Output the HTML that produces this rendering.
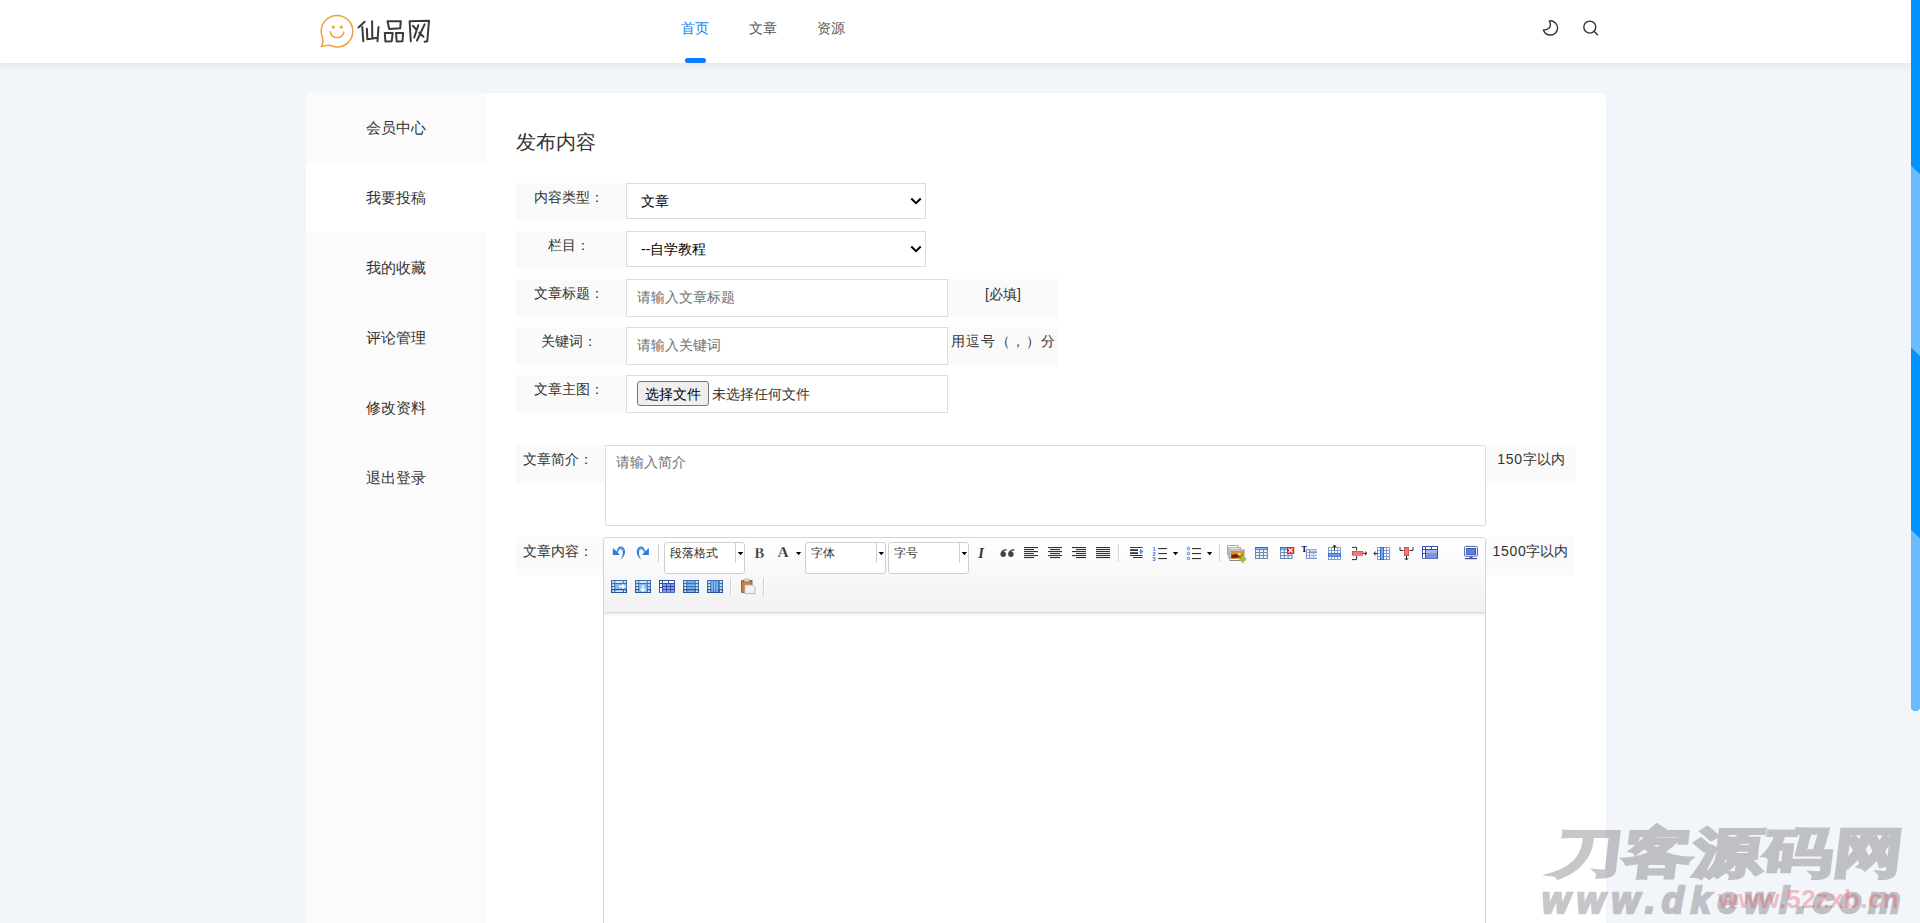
<!DOCTYPE html>
<html><head><meta charset="utf-8">
<style>
*{box-sizing:border-box;margin:0;padding:0}
html,body{width:1920px;height:923px;overflow:hidden;background:#f2f5fa;font-family:"Liberation Sans",sans-serif;color:#333}
.a{position:absolute}
#hdr{left:0;top:0;width:1911px;height:63px;background:#fff;box-shadow:0 2px 8px rgba(0,0,0,.08)}
.nav{top:19px;font-size:14px;line-height:18px;color:#555;white-space:nowrap}
#card{left:306px;top:93px;width:1300px;height:900px;background:#fff;border-radius:6px;overflow:hidden}
#side{left:0;top:0;width:180px;height:900px;background:#fbfbfb}
.si{left:0;width:180px;height:70px;line-height:70px;text-align:center;font-size:15px;color:#333}
.lab{background:#fafafa;font-size:14px;color:#333;text-align:center}
.box{background:#fff;border:1px solid #ddd}
.ph{color:#707070}
.cmb{height:32px;background:#fff;border:1px solid #cfcfcf;border-radius:3px;font-size:12px;color:#333}
.cmb span{position:absolute;left:5px;top:3px;line-height:14px}
.cmb i{position:absolute;top:0;width:1px;height:20px;background:#d0d0d0}

</style></head><body>
<div id="hdr" class="a">
  <svg class="a" style="left:0;top:0" width="440" height="63" viewBox="0 0 440 63">
    <path d="M337 15.4 A15.8 15.8 0 0 1 352.8 31.2 A15.8 15.8 0 0 1 337 47 C333.5 47 331.5 45.6 329 45.3 C326 45 323.5 46.5 321.3 46.4 C322.8 44 323.5 41 322.5 37.5 C321.6 35 321.2 33 321.2 31.2 A15.8 15.8 0 0 1 337 15.4 Z" fill="none" stroke="#eea03c" stroke-width="1.5" stroke-linejoin="round"/>
    <circle cx="333.3" cy="27.1" r="1.6" fill="#eea03c"/><circle cx="341.3" cy="27.1" r="1.6" fill="#eea03c"/>
    <path d="M330.4 31.8 C331.5 39.5 342.5 39.5 343.8 32.1" fill="none" stroke="#eea03c" stroke-width="1.5" stroke-linecap="round"/>
    <g fill="none" stroke="#3a3a3a" stroke-width="2" stroke-linecap="round" stroke-linejoin="round">
      <path d="M364.6 21.7 L358.5 27.5 M362.3 27.1 L363.3 41.2 M366.9 28.7 L367.3 39.2 L377.7 37.7 M372.1 21.2 L372.3 38.3 M378.5 27.1 L377.5 41.2"/>
      <path d="M387.5 21.3 L400.8 21.3 L400.2 28.3 L389.2 29 Z M384.8 33.1 L392.7 33.1 L391.7 41.2 L385.4 41.5 Z M396 32.9 L403.1 32.9 L402.5 41.2 L396.7 41.5 Z"/>
      <path d="M409.6 21.3 L410.8 41.2 M409.6 21.3 L429 20.8 L427.3 41.2 L424.6 41.7 M418.3 25.2 L414.2 37.5 M412.8 25.8 L416.5 29.8 M424.6 24.4 L417 40.5 M419.2 32.6 L423.5 36.8"/>
    </g>
  </svg>
  <div class="a nav" style="left:681px;color:#1a7ff0">首页</div>
  <div class="a nav" style="left:749px">文章</div>
  <div class="a nav" style="left:817px">资源</div>
  <div class="a" style="left:685px;top:58px;width:21px;height:5px;border-radius:3px;background:#0a7cff"></div>
  <svg class="a" style="left:1540px;top:18px" width="20" height="20" viewBox="0 0 20 20">
    <path d="M9.3 3.2 C11 5.5 10.8 9 8.5 10.5 C7 11.5 5 12 3.4 11.9 C4.5 15 7.3 17 10.5 17 C14.5 17 17.6 13.8 17.6 10 C17.6 6 14.2 2.8 10.3 2.8 C9.9 2.8 9.5 2.9 9.3 3.2 Z" fill="none" stroke="#333" stroke-width="1.4" stroke-linejoin="round"/>
  </svg>
  <svg class="a" style="left:1580px;top:18px" width="20" height="20" viewBox="0 0 20 20">
    <circle cx="9.8" cy="9.1" r="6" fill="none" stroke="#333" stroke-width="1.4"/>
    <path d="M14 13.3 L17.5 16.8" stroke="#333" stroke-width="1.4" stroke-linecap="round"/>
  </svg>
</div>

<div id="card" class="a">
  <div id="side" class="a">
    <div class="a si" style="top:0">会员中心</div>
    <div class="a si" style="top:70px;background:#fff">我要投稿</div>
    <div class="a si" style="top:140px">我的收藏</div>
    <div class="a si" style="top:210px">评论管理</div>
    <div class="a si" style="top:280px">修改资料</div>
    <div class="a si" style="top:350px">退出登录</div>
  </div>
</div>

<div class="a" style="left:516px;top:130px;font-size:20px;line-height:24px;color:#333">发布内容</div>

<!-- rows -->
<div class="a lab" style="padding-right:5px;left:516px;top:183px;width:110px;height:38px;line-height:28px">内容类型：</div>
<div class="a box" style="left:626px;top:183px;width:300px;height:36px;font-size:14px;line-height:34px;padding-left:14px;color:#000">文章</div>
<div class="a lab" style="padding-right:5px;left:516px;top:231px;width:110px;height:38px;line-height:28px">栏目：</div>
<div class="a box" style="left:626px;top:231px;width:300px;height:36px;font-size:14px;line-height:34px;padding-left:14px;color:#000">--自学教程</div>

<div class="a lab" style="padding-right:5px;left:516px;top:279px;width:110px;height:38px;line-height:28px">文章标题：</div>
<div class="a box ph" style="left:626px;top:279px;width:322px;height:38px;font-size:14px;line-height:35px;padding-left:10px">请输入文章标题</div>
<div class="a lab" style="left:948px;top:279px;width:110px;height:38px;line-height:30px">[必填]</div>

<div class="a lab" style="padding-right:5px;left:516px;top:327px;width:110px;height:38px;line-height:28px">关键词：</div>
<div class="a box ph" style="left:626px;top:327px;width:322px;height:38px;font-size:14px;line-height:35px;padding-left:10px">请输入关键词</div>
<div class="a lab" style="left:948px;top:327px;width:110px;height:38px;line-height:28px;text-align:left;padding-left:3px;letter-spacing:1px">用逗号（，）分</div>

<div class="a lab" style="padding-right:5px;left:516px;top:375px;width:110px;height:38px;line-height:28px">文章主图：</div>
<div class="a box" style="left:626px;top:375px;width:322px;height:38px"></div>
<div class="a" style="left:637px;top:381px;width:72px;height:25px;background:#efefef;border:1px solid #767676;border-radius:3px;font-size:14px;line-height:25px;text-align:center;color:#000">选择文件</div>
<div class="a" style="left:712px;top:385px;font-size:14px;line-height:18px;color:#333;white-space:nowrap">未选择任何文件</div>
<svg class="a" style="left:0;top:0" width="1000" height="300" viewBox="0 0 1000 300"><path d="M912 199.2 L916 203.2 L920 199.2 M912 247.2 L916 251.2 L920 247.2" fill="none" stroke="#000" stroke-width="2" stroke-linecap="square"/></svg>

<div class="a lab" style="padding-right:5px;left:516px;top:445px;width:89px;height:38px;line-height:28px">文章简介：</div>
<div class="a box ph" style="left:605px;top:445px;width:881px;height:81px;font-size:14px;line-height:20px;padding:6px 10px;border-radius:2px">请输入简介</div>
<div class="a lab" style="left:1486px;top:445px;width:90px;height:38px;line-height:28px"><span style="letter-spacing:.7px">150</span>字以内</div>

<div class="a lab" style="padding-right:5px;left:516px;top:537px;width:89px;height:38px;line-height:28px">文章内容：</div>
<div class="a lab" style="left:1486px;top:537px;width:89px;height:38px;line-height:28px"><span style="letter-spacing:.7px">1500</span>字以内</div>
<div class="a" id="ed" style="left:603px;top:537px;width:883px;height:420px;border:1px solid #d4d4d4;border-radius:4px;background:#fff;overflow:hidden">
  <div class="a" style="left:0;top:0;width:881px;height:75px;background:linear-gradient(#fff,#f1f1f1);border-bottom:1px solid #dcdcdc;box-shadow:0 1px 3px rgba(0,0,0,.12)"></div>
</div>
<div class="a cmb" style="left:664px;top:542px;width:81px"><span>段落格式</span><i style="left:70px"></i></div>
<div class="a cmb" style="left:805px;top:542px;width:81px"><span>字体</span><i style="left:70px"></i></div>
<div class="a cmb" style="left:888px;top:542px;width:81px"><span>字号</span><i style="left:70px"></i></div>
<svg class="a" style="left:0;top:0;pointer-events:none" width="1920" height="923" viewBox="0 0 1920 923"><g><path d="M612.9 548.1 L612.9 554.9 L619.7 554.9 L617.6 552.3 Z" fill="#2b7bd8"/>
<path d="M616.7 550.9 C617.6 548 619 546.6 620.6 546.6 C623.3 546.6 625 549 625 552 C625 555 623 557.8 620.2 559.9 C621.8 557.5 622.9 555.5 622.9 553 C622.9 550.6 621.8 549.2 620.5 549.2 C619.3 549.2 618.4 550.3 617.9 552.5 Z" fill="#2b7bd8"/>
<path d="M618.6 550.6 C619.2 549 620 548.2 620.8 548.2 C622 548.2 623 549.2 623.6 550.8" fill="none" stroke="#9ccaf8" stroke-width="0.9"/></g><g transform="translate(1261.8,0) scale(-1,1)"><path d="M612.9 548.1 L612.9 554.9 L619.7 554.9 L617.6 552.3 Z" fill="#2b7bd8"/>
<path d="M616.7 550.9 C617.6 548 619 546.6 620.6 546.6 C623.3 546.6 625 549 625 552 C625 555 623 557.8 620.2 559.9 C621.8 557.5 622.9 555.5 622.9 553 C622.9 550.6 621.8 549.2 620.5 549.2 C619.3 549.2 618.4 550.3 617.9 552.5 Z" fill="#2b7bd8"/>
<path d="M618.6 550.6 C619.2 549 620 548.2 620.8 548.2 C622 548.2 623 549.2 623.6 550.8" fill="none" stroke="#9ccaf8" stroke-width="0.9"/></g><rect x="658.0" y="544" width="1" height="18" fill="#cfcfd4"/><rect x="659.0" y="544" width="1" height="18" fill="#fff"/><rect x="1117.9" y="544" width="1" height="18" fill="#cfcfd4"/><rect x="1118.9" y="544" width="1" height="18" fill="#fff"/><rect x="1219.1" y="544" width="1" height="18" fill="#cfcfd4"/><rect x="1220.1" y="544" width="1" height="18" fill="#fff"/><rect x="730.1" y="578" width="1" height="18" fill="#cfcfd4"/><rect x="731.1" y="578" width="1" height="18" fill="#fff"/><rect x="763.0" y="578" width="1" height="18" fill="#cfcfd4"/><rect x="764.0" y="578" width="1" height="18" fill="#fff"/><path d="M737.7 552 L743.3 552 L740.5 555.2 Z" fill="#000"/><path d="M796 552 L801.2 552 L798.6 555.2 Z" fill="#000"/><path d="M878.7 552 L884 552 L881.35 555.2 Z" fill="#000"/><path d="M961.7 552 L967 552 L964.35 555.2 Z" fill="#000"/><path d="M1172.9 552 L1178.2 552 L1175.5500000000002 555.2 Z" fill="#000"/><path d="M1207 552 L1212.2 552 L1209.6 555.2 Z" fill="#000"/><text x="754.6" y="558" font-family="Liberation Serif" font-weight="bold" font-size="14.5" fill="#333" stroke="#fff" stroke-width="0.25">B</text><text x="777.4" y="557.3" font-family="Liberation Serif" font-weight="bold" font-size="15.5" fill="#333" stroke="#fff" stroke-width="0.25">A</text><text x="978.2" y="558" font-family="Liberation Serif" font-weight="bold" font-style="italic" font-size="14.5" fill="#333">I</text><circle cx="1003.2" cy="554.2" r="2.7" fill="#444"/><path d="M1000.6 553.6 C1000.8000000000001 551 1003.0 549.4 1006.6 549 L1006.6 550.2 C1004.4000000000001 550.8 1003.0 551.8 1003.6 552.6 Z" fill="#444"/><circle cx="1010.9" cy="554.2" r="2.7" fill="#444"/><path d="M1008.3 553.6 C1008.5 551 1010.6999999999999 549.4 1014.3 549 L1014.3 550.2 C1012.1 550.8 1010.6999999999999 551.8 1011.3 552.6 Z" fill="#444"/><rect x="1024" y="547" width="14" height="1.1" fill="#333"/><rect x="1024" y="549" width="10" height="1.1" fill="#333"/><rect x="1024" y="551" width="14" height="1.1" fill="#333"/><rect x="1024" y="553" width="10" height="1.1" fill="#333"/><rect x="1024" y="555" width="14" height="1.1" fill="#333"/><rect x="1024" y="557" width="10" height="1.1" fill="#333"/><rect x="1048.0" y="547" width="14" height="1.1" fill="#333"/><rect x="1050.0" y="549" width="10" height="1.1" fill="#333"/><rect x="1048.0" y="551" width="14" height="1.1" fill="#333"/><rect x="1050.0" y="553" width="10" height="1.1" fill="#333"/><rect x="1048.0" y="555" width="14" height="1.1" fill="#333"/><rect x="1050.0" y="557" width="10" height="1.1" fill="#333"/><rect x="1072" y="547" width="14" height="1.1" fill="#333"/><rect x="1076" y="549" width="10" height="1.1" fill="#333"/><rect x="1072" y="551" width="14" height="1.1" fill="#333"/><rect x="1076" y="553" width="10" height="1.1" fill="#333"/><rect x="1072" y="555" width="14" height="1.1" fill="#333"/><rect x="1076" y="557" width="10" height="1.1" fill="#333"/><rect x="1096" y="547" width="14" height="1.1" fill="#333"/><rect x="1096" y="549" width="14" height="1.1" fill="#333"/><rect x="1096" y="551" width="14" height="1.1" fill="#333"/><rect x="1096" y="553" width="14" height="1.1" fill="#333"/><rect x="1096" y="555" width="14" height="1.1" fill="#333"/><rect x="1096" y="557" width="14" height="1.1" fill="#333"/><rect x="1130" y="547" width="12.5" height="1" fill="#444"/><rect x="1130" y="549.3" width="8" height="1.6" fill="#222"/><rect x="1130" y="552.3" width="8" height="1.6" fill="#222"/><rect x="1130" y="555" width="12.5" height="1" fill="#333"/><rect x="1133" y="557" width="9.5" height="1" fill="#333"/><path d="M1139 551.6 L1141 551.6 L1140 549.4 L1143.2 551.6 L1140 553.8 L1141 551.6" fill="#3d8cf0" stroke="#3d8cf0" stroke-width="0.8"/><text x="1152.5" y="551" font-family="Liberation Sans" font-weight="bold" font-size="5.5" fill="#2f6fe8">1</text><text x="1152.5" y="556" font-family="Liberation Sans" font-weight="bold" font-size="5.5" fill="#2f6fe8">2</text><text x="1152.5" y="561" font-family="Liberation Sans" font-weight="bold" font-size="5.5" fill="#2f6fe8">3</text><rect x="1158.3" y="548" width="8.6" height="1.1" fill="#333"/><rect x="1158.3" y="553" width="8.6" height="1.1" fill="#333"/><rect x="1158.3" y="558" width="8.6" height="1.1" fill="#333"/><circle cx="1188.5" cy="548.5" r="1.25" fill="none" stroke="#2f6fe8" stroke-width="0.9"/><rect x="1192" y="548.0" width="9" height="1.1" fill="#333"/><circle cx="1188.5" cy="553.5" r="1.25" fill="none" stroke="#2f6fe8" stroke-width="0.9"/><rect x="1192" y="553.0" width="9" height="1.1" fill="#333"/><circle cx="1188.5" cy="558.5" r="1.25" fill="none" stroke="#2f6fe8" stroke-width="0.9"/><rect x="1192" y="558.0" width="9" height="1.1" fill="#333"/><rect x="1227.5" y="545.5" width="10.5" height="9" fill="#fff" stroke="#aaa" stroke-width="1"/><rect x="1228.8" y="547.8" width="11.5" height="10" fill="#fff" stroke="#999" stroke-width="1"/><rect x="1230" y="550" width="14" height="10.5" fill="#fff" stroke="#888" stroke-width="1"/><rect x="1231" y="551" width="12.4" height="7.8" fill="#d9670f"/><rect x="1231" y="551" width="12.4" height="3" fill="#e98a2a"/><circle cx="1239.5" cy="554" r="1.6" fill="#f6d36a"/><path d="M1231.5 555.5 L1236 554 L1240 557 L1231.5 558" fill="#4a2a12"/><path d="M1241.5 555.5 h2.5 v2.3 h2.2 v2.6 h-2.2 v2.3 h-2.5 v-2.3 h-2.2 v-2.6 h2.2 Z" fill="#8ccc2a"/><rect x="1255" y="547" width="13" height="12" fill="#6d89b8"/><rect x="1255" y="547" width="13" height="2.2" fill="#2d6be0"/><rect x="1256" y="548.2" width="11" height="1" fill="#9cc4f4"/><rect x="1256.00" y="550.20" width="2.90" height="1.83" fill="#fff"/><rect x="1256.00" y="553.13" width="2.90" height="1.83" fill="#fff"/><rect x="1256.00" y="556.07" width="2.90" height="1.83" fill="#fff"/><rect x="1260.00" y="550.20" width="2.90" height="1.83" fill="#fff"/><rect x="1260.00" y="553.13" width="2.90" height="1.83" fill="#fff"/><rect x="1260.00" y="556.07" width="2.90" height="1.83" fill="#fff"/><rect x="1264.00" y="550.20" width="2.90" height="1.83" fill="#fff"/><rect x="1264.00" y="553.13" width="2.90" height="1.83" fill="#fff"/><rect x="1264.00" y="556.07" width="2.90" height="1.83" fill="#fff"/><rect x="1280" y="547" width="12.5" height="12" fill="#6d89b8"/><rect x="1280" y="547" width="12.5" height="2.2" fill="#2d6be0"/><rect x="1281" y="548.2" width="10.5" height="1" fill="#9cc4f4"/><rect x="1281.00" y="550.20" width="2.73" height="1.83" fill="#fff"/><rect x="1281.00" y="553.13" width="2.73" height="1.83" fill="#fff"/><rect x="1281.00" y="556.07" width="2.73" height="1.83" fill="#fff"/><rect x="1284.83" y="550.20" width="2.73" height="1.83" fill="#fff"/><rect x="1284.83" y="553.13" width="2.73" height="1.83" fill="#fff"/><rect x="1284.83" y="556.07" width="2.73" height="1.83" fill="#fff"/><rect x="1288.67" y="550.20" width="2.73" height="1.83" fill="#fff"/><rect x="1288.67" y="553.13" width="2.73" height="1.83" fill="#fff"/><rect x="1288.67" y="556.07" width="2.73" height="1.83" fill="#fff"/><rect x="1287" y="547" width="7.2" height="7" fill="#e02020"/><path d="M1288.6 548.6 L1292.6 552.6 M1292.6 548.6 L1288.6 552.6" stroke="#fff" stroke-width="1.4"/><text x="1301.5" y="552.3" font-family="Liberation Serif" font-weight="bold" font-size="8" fill="#000">T</text><rect x="1305.8" y="549.2" width="11.2" height="9.8" fill="#7f95c0"/><rect x="1307" y="550.3" width="2" height="2" fill="#fff"/><rect x="1307" y="553" width="2" height="2.4" fill="#fff"/><rect x="1307" y="556" width="2" height="2" fill="#fff"/><rect x="1310" y="550.3" width="7" height="1" fill="#fff"/><rect x="1310" y="553" width="3" height="2" fill="#fff"/><rect x="1314" y="553" width="3" height="2" fill="#fff"/><rect x="1310" y="556" width="3" height="2" fill="#fff"/><rect x="1314" y="556" width="3" height="2" fill="#fff"/><rect x="1310" y="553" width="7" height="5" fill="#c9d6f0" opacity="0.6"/><rect x="1328" y="547" width="13" height="13" fill="#7d9bd0"/><rect x="1329.00" y="548.00" width="2.00" height="2.00" fill="#fff"/><rect x="1329.00" y="551.00" width="2.00" height="2.00" fill="#fff"/><rect x="1329.00" y="554.00" width="2.00" height="2.00" fill="#fff"/><rect x="1329.00" y="557.00" width="2.00" height="2.00" fill="#fff"/><rect x="1332.00" y="548.00" width="2.00" height="2.00" fill="#fff"/><rect x="1332.00" y="551.00" width="2.00" height="2.00" fill="#fff"/><rect x="1332.00" y="554.00" width="2.00" height="2.00" fill="#fff"/><rect x="1332.00" y="557.00" width="2.00" height="2.00" fill="#fff"/><rect x="1335.00" y="548.00" width="2.00" height="2.00" fill="#fff"/><rect x="1335.00" y="551.00" width="2.00" height="2.00" fill="#fff"/><rect x="1335.00" y="554.00" width="2.00" height="2.00" fill="#fff"/><rect x="1335.00" y="557.00" width="2.00" height="2.00" fill="#fff"/><rect x="1338.00" y="548.00" width="2.00" height="2.00" fill="#fff"/><rect x="1338.00" y="551.00" width="2.00" height="2.00" fill="#fff"/><rect x="1338.00" y="554.00" width="2.00" height="2.00" fill="#fff"/><rect x="1338.00" y="557.00" width="2.00" height="2.00" fill="#fff"/><rect x="1328" y="553" width="13" height="3.6" fill="#2f6fe0"/><rect x="1329" y="554" width="11" height="1.6" fill="#7aa6f0"/><path d="M1334.5 550 L1334.5 545.2 M1332.8 547 L1334.5 545 L1336.2 547" stroke="#222" stroke-width="1" fill="none"/><path d="M1352 547.4 H1356.6 V550.5 M1352 559.6 H1356.6 V556" stroke="#333" stroke-width="1" fill="none"/><rect x="1352" y="551" width="11" height="4.6" fill="#c84040"/><rect x="1352.6" y="551.6" width="9.8" height="3.4" fill="#f07878"/><path d="M1363 553.3 H1366.5 M1365 551.6 L1367 553.3 L1365 555" stroke="#222" stroke-width="1" fill="none"/><rect x="1377" y="547" width="13" height="13" fill="#7d9bd0"/><rect x="1378.00" y="548.00" width="2.00" height="2.00" fill="#fff"/><rect x="1378.00" y="551.00" width="2.00" height="2.00" fill="#fff"/><rect x="1378.00" y="554.00" width="2.00" height="2.00" fill="#fff"/><rect x="1378.00" y="557.00" width="2.00" height="2.00" fill="#fff"/><rect x="1381.00" y="548.00" width="2.00" height="2.00" fill="#fff"/><rect x="1381.00" y="551.00" width="2.00" height="2.00" fill="#fff"/><rect x="1381.00" y="554.00" width="2.00" height="2.00" fill="#fff"/><rect x="1381.00" y="557.00" width="2.00" height="2.00" fill="#fff"/><rect x="1384.00" y="548.00" width="2.00" height="2.00" fill="#fff"/><rect x="1384.00" y="551.00" width="2.00" height="2.00" fill="#fff"/><rect x="1384.00" y="554.00" width="2.00" height="2.00" fill="#fff"/><rect x="1384.00" y="557.00" width="2.00" height="2.00" fill="#fff"/><rect x="1387.00" y="548.00" width="2.00" height="2.00" fill="#fff"/><rect x="1387.00" y="551.00" width="2.00" height="2.00" fill="#fff"/><rect x="1387.00" y="554.00" width="2.00" height="2.00" fill="#fff"/><rect x="1387.00" y="557.00" width="2.00" height="2.00" fill="#fff"/><rect x="1380" y="547" width="4" height="13" fill="#2f6fe0"/><rect x="1381" y="548" width="2" height="11" fill="#7aa6f0"/><path d="M1377.5 553.5 H1374 M1375.7 551.8 L1373.8 553.5 L1375.7 555.2" stroke="#222" stroke-width="1" fill="none"/><path d="M1400 547 V550.5 H1403.5 M1413 547 V550.5 H1409.5" stroke="#333" stroke-width="1" fill="none"/><rect x="1404" y="547" width="5" height="9" fill="#c84040"/><rect x="1404.6" y="547.6" width="3.8" height="7.8" fill="#f07878"/><path d="M1406.5 556 V559.8 M1404.8 558.2 L1406.5 560 L1408.2 558.2" stroke="#222" stroke-width="1" fill="none"/><rect x="1422" y="546" width="16" height="12.8" fill="#3550a8"/><rect x="1423" y="547" width="2" height="2" fill="#fff"/><rect x="1426" y="547" width="5" height="2" fill="#fff"/><rect x="1432" y="547" width="5" height="2" fill="#fff"/><rect x="1423" y="550" width="2" height="3" fill="#fff"/><rect x="1423" y="554" width="2" height="4" fill="#fff"/><rect x="1426" y="550" width="11" height="8" fill="#7c95e0"/><rect x="1426" y="550" width="11" height="3" fill="#a3b6ee"/><rect x="1464.6" y="546.4" width="12.8" height="9.8" rx="1" fill="#fff" stroke="#4a64a0" stroke-width="1"/><rect x="1466.2" y="548" width="9.8" height="6.8" fill="#1f3f9a"/><rect x="1466.8" y="548.6" width="8.6" height="5.6" fill="#5a7de0"/><rect x="1469.5" y="556.4" width="3" height="1.6" fill="#4a64a0"/><rect x="1465" y="558" width="12" height="1.2" fill="#3a5090"/><rect x="611" y="580" width="16" height="13" fill="#3a72b8"/><rect x="611" y="589" width="16" height="4" fill="#24539a"/><rect x="612.2" y="581.2" width="2" height="1.6" fill="#fff"/><rect x="623.8" y="581.2" width="2" height="1.6" fill="#fff"/><rect x="612.2" y="584.3" width="2" height="1.6" fill="#fff"/><rect x="623.8" y="584.3" width="2" height="1.6" fill="#fff"/><rect x="612.2" y="587.3" width="2" height="1.6" fill="#fff"/><rect x="623.8" y="587.3" width="2" height="1.6" fill="#fff"/><rect x="612.2" y="590.3" width="2" height="1.6" fill="#fff"/><rect x="623.8" y="590.3" width="2" height="1.6" fill="#fff"/><rect x="615.2" y="581.2" width="7.6" height="1.6" fill="#fff"/><rect x="615.2" y="590.3" width="7.6" height="1.6" fill="#eef5ff"/><rect x="615.2" y="584" width="11" height="5" fill="#8bbdf5"/><path d="M619 586.5 H624.5 M622.2 584.4 L624.6 586.5 L622.2 588.6" stroke="#fff" stroke-width="1.3" fill="none"/><rect x="635" y="580" width="16" height="13" fill="#3a72b8"/><rect x="635" y="589" width="16" height="4" fill="#24539a"/><rect x="636.2" y="581.2" width="2" height="1.6" fill="#fff"/><rect x="647.8" y="581.2" width="2" height="1.6" fill="#fff"/><rect x="636.2" y="584.3" width="2" height="1.6" fill="#fff"/><rect x="647.8" y="584.3" width="2" height="1.6" fill="#fff"/><rect x="636.2" y="587.3" width="2" height="1.6" fill="#fff"/><rect x="647.8" y="587.3" width="2" height="1.6" fill="#fff"/><rect x="636.2" y="590.3" width="2" height="1.6" fill="#fff"/><rect x="647.8" y="590.3" width="2" height="1.6" fill="#fff"/><rect x="639.2" y="581.2" width="7.6" height="1.6" fill="#fff"/><rect x="639.2" y="590.3" width="7.6" height="1.6" fill="#eef5ff"/><rect x="639.2" y="584" width="7.6" height="8" fill="#8bbdf5"/><path d="M643 585 V591 M640.6 588.6 L643 591 L645.4 588.6" stroke="#fff" stroke-width="1.3" fill="none"/><rect x="659" y="580" width="16" height="12.8" fill="#3550a8"/><rect x="660" y="581" width="2" height="2" fill="#fff"/><rect x="663" y="581" width="5" height="2" fill="#fff"/><rect x="669" y="581" width="5" height="2" fill="#fff"/><rect x="660" y="584" width="2" height="3" fill="#fff"/><rect x="660" y="588" width="2" height="4" fill="#fff"/><rect x="663" y="584" width="3" height="2" fill="#8f9ae6"/><rect x="667" y="584" width="3" height="2" fill="#8f9ae6"/><rect x="671" y="584" width="3" height="2" fill="#8f9ae6"/><rect x="663" y="587" width="3" height="2" fill="#8f9ae6"/><rect x="667" y="587" width="3" height="2" fill="#8f9ae6"/><rect x="671" y="587" width="3" height="2" fill="#8f9ae6"/><rect x="663" y="590" width="3" height="2" fill="#8f9ae6"/><rect x="667" y="590" width="3" height="2" fill="#8f9ae6"/><rect x="671" y="590" width="3" height="2" fill="#8f9ae6"/><rect x="683" y="580" width="16" height="13" fill="#3a72b8"/><rect x="683" y="589" width="16" height="4" fill="#24539a"/><rect x="684.2" y="581.2" width="2" height="1.6" fill="#fff"/><rect x="695.8" y="581.2" width="2" height="1.6" fill="#fff"/><rect x="684.2" y="584.3" width="2" height="1.6" fill="#fff"/><rect x="695.8" y="584.3" width="2" height="1.6" fill="#fff"/><rect x="684.2" y="587.3" width="2" height="1.6" fill="#fff"/><rect x="695.8" y="587.3" width="2" height="1.6" fill="#fff"/><rect x="684.2" y="590.3" width="2" height="1.6" fill="#fff"/><rect x="695.8" y="590.3" width="2" height="1.6" fill="#fff"/><rect x="687.2" y="581.2" width="7.6" height="1.6" fill="#8bbdf5"/><rect x="687.2" y="584.3" width="7.6" height="1.6" fill="#8bbdf5"/><rect x="687.2" y="587.3" width="7.6" height="1.6" fill="#8bbdf5"/><rect x="687.2" y="590.3" width="7.6" height="1.6" fill="#8bbdf5"/><rect x="707" y="580" width="16" height="13" fill="#3a72b8"/><rect x="707" y="589" width="16" height="4" fill="#24539a"/><rect x="708.2" y="581.2" width="2" height="1.6" fill="#fff"/><rect x="719.8" y="581.2" width="2" height="1.6" fill="#fff"/><rect x="708.2" y="584.3" width="2" height="1.6" fill="#fff"/><rect x="719.8" y="584.3" width="2" height="1.6" fill="#fff"/><rect x="708.2" y="587.3" width="2" height="1.6" fill="#fff"/><rect x="719.8" y="587.3" width="2" height="1.6" fill="#fff"/><rect x="708.2" y="590.3" width="2" height="1.6" fill="#fff"/><rect x="719.8" y="590.3" width="2" height="1.6" fill="#fff"/><rect x="711.3" y="581" width="1.6" height="11" fill="#8bbdf5"/><rect x="713.8" y="581" width="1.6" height="11" fill="#8bbdf5"/><rect x="716.3" y="581" width="1.6" height="11" fill="#8bbdf5"/><rect x="741" y="580" width="11.5" height="13" rx="1" fill="#a8612a"/><rect x="742.2" y="581.5" width="9" height="10.5" fill="#c98048"/><rect x="744" y="579" width="5.5" height="2.5" rx="1" fill="#ddd" stroke="#999" stroke-width="0.6"/><path d="M744.8 585 H752.5 L755 587.5 V593.6 H744.8 Z" fill="#f0f2f6" stroke="#aaa" stroke-width="0.8"/></svg>

<div class="a" id="wm" style="left:0;top:0;width:1920px;height:923px;opacity:.3">
<div class="a" id="wm1" style="left:1559px;top:813px;letter-spacing:0.6px;font-size:53px;line-height:80px;font-weight:900;color:#48484e;-webkit-text-stroke:3px #48484e;white-space:nowrap;transform-origin:0 0;transform:matrix(1.305,0,-0.12,1,0,0)">刀客源码网</div>
<div class="a" id="wm2" style="left:1542px;top:876px;font-size:36px;line-height:50px;font-weight:bold;font-style:italic;color:#48484e;-webkit-text-stroke:2.4px #48484e;white-space:nowrap;letter-spacing:6.8px;transform-origin:0 0">www.dkewl.com</div>
</div>
<div class="a" id="wm3" style="left:1718px;top:881px;letter-spacing:.35px;font-size:26px;line-height:36px;font-weight:bold;color:rgba(235,80,95,.35);white-space:nowrap;transform-origin:0 0">www.52zxb.cn</div>
<svg id="sb" class="a" style="left:1911px;top:0" width="9" height="711" viewBox="0 0 9 711">
  <defs><clipPath id="sbc"><path d="M0 0 H9 V706.5 A4.5 4.5 0 0 1 0 706.5 Z"/></clipPath></defs>
  <g clip-path="url(#sbc)">
    <rect x="0" y="0" width="9" height="711" fill="#0092ff"/>
    <path d="M0 165.7 L9 174.2 L9 356 L0 347.5 Z M0 529.8 L9 538.2 L9 711 L0 711 Z" fill="#69bdff"/>
  </g>
</svg>
</body></html>
